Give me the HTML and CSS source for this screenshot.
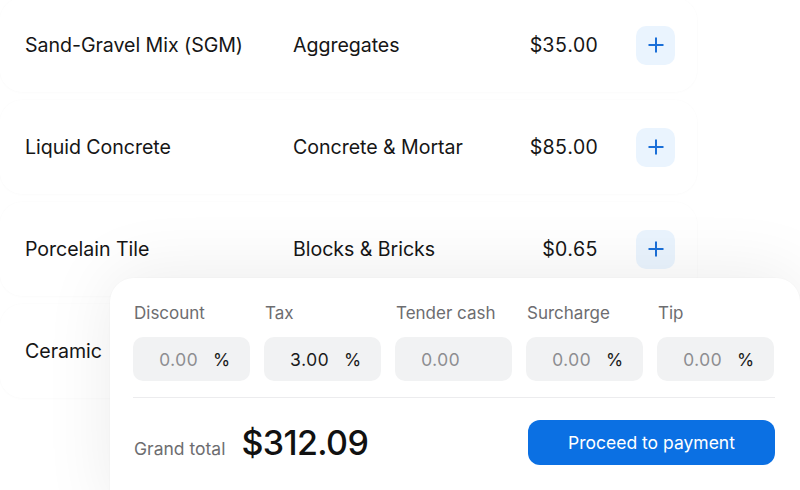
FILE: index.html
```html
<!DOCTYPE html>
<html>
<head>
<meta charset="utf-8">
<link rel="stylesheet" href="styles.css">
</head>
<body>
<div class="page">
  <div class="list">
    <div class="row">
      <span class="name">Sand-Gravel Mix (SGM)</span>
      <span class="cat">Aggregates</span>
      <span class="price">$35.00</span>
      <button class="add"><svg width="18" height="18" viewBox="0 0 18 18"><path d="M9 1.5v15M1.5 9h15" stroke="#1a6fd8" stroke-width="2" fill="none"/></svg></button>
    </div>
    <div class="row">
      <span class="name">Liquid Concrete</span>
      <span class="cat">Concrete &amp; Mortar</span>
      <span class="price">$85.00</span>
      <button class="add"><svg width="18" height="18" viewBox="0 0 18 18"><path d="M9 1.5v15M1.5 9h15" stroke="#1a6fd8" stroke-width="2" fill="none"/></svg></button>
    </div>
    <div class="row">
      <span class="name">Porcelain Tile</span>
      <span class="cat">Blocks &amp; Bricks</span>
      <span class="price">$0.65</span>
      <button class="add"><svg width="18" height="18" viewBox="0 0 18 18"><path d="M9 1.5v15M1.5 9h15" stroke="#1a6fd8" stroke-width="2" fill="none"/></svg></button>
    </div>
    <div class="row">
      <span class="name">Ceramic</span>
      <span class="cat"></span>
      <span class="price"></span>
      <button class="add"><svg width="18" height="18" viewBox="0 0 18 18"><path d="M9 1.5v15M1.5 9h15" stroke="#1a6fd8" stroke-width="2" fill="none"/></svg></button>
    </div>
  </div>

  <div class="panel">
    <div class="fields">
      <div class="field"><span class="label">Discount</span><div class="input"><span class="val">0.00</span><span class="unit">%</span></div></div>
      <div class="field"><span class="label">Tax</span><div class="input"><span class="val set">3.00</span><span class="unit">%</span></div></div>
      <div class="field"><span class="label">Tender cash</span><div class="input"><span class="val">0.00</span></div></div>
      <div class="field"><span class="label">Surcharge</span><div class="input"><span class="val">0.00</span><span class="unit">%</span></div></div>
      <div class="field"><span class="label">Tip</span><div class="input"><span class="val">0.00</span><span class="unit">%</span></div></div>
    </div>
    <div class="divider"></div>
    <div class="footer">
      <div class="total"><span class="gt-label">Grand total</span><span class="gt-value">$312.09</span></div>
      <button class="pay">Proceed to payment</button>
    </div>
  </div>
</div>
</body>
</html>
```

FILE: styles.css
```css
* { box-sizing: border-box; }
html, body {
  margin: 0;
  padding: 0;
  background: #ffffff;
  overflow: hidden;
}
body {
  width: 800px;
  height: 490px;
  font-family: Inter, "Noto Sans", sans-serif;
  color: #161616;
}
.page {
  position: relative;
  width: 800px;
  height: 490px;
  overflow: hidden;
}
.list {
  display: flex;
  flex-direction: column;
  gap: 8px;
  margin-top: -2px;
  width: 697px;
}
.row {
  height: 94px;
  display: flex;
  align-items: center;
  padding-left: 25px;
  border-radius: 22px;
  background: #ffffff;
  box-shadow: 0 0 0 1px rgba(0, 0, 0, 0.008), 0 1px 4px rgba(0, 0, 0, 0.012);
  font-size: 19.6px;
  letter-spacing: -0.05px;
}
.name { width: 268px; }
.cat { width: 200px; }
.price { width: 105px; text-align: right; font-variant-numeric: tabular-nums; }
.add {
  margin-left: 38px;
  width: 39px;
  height: 39px;
  border: none;
  border-radius: 10px;
  background: #eaf4fe;
  display: flex;
  align-items: center;
  justify-content: center;
  padding: 0;
}
.panel {
  position: absolute;
  left: 110px;
  top: 278px;
  width: 690px;
  height: 240px;
  background: #ffffff;
  border-radius: 24px;
  padding: 24px 23px 0 23px;
  box-shadow: 0 -4px 70px rgba(0, 0, 0, 0.08), 0 0 0 1px rgba(0, 0, 0, 0.012);
}
.fields {
  display: grid;
  grid-template-columns: repeat(5, 117px);
  column-gap: 14px;
}
.field {
  display: flex;
  flex-direction: column;
  gap: 13px;
}
.label {
  font-size: 17px;
  line-height: 22px;
  color: #6d6d70;
  padding-left: 1px;
}
.input {
  height: 44px;
  border-radius: 10px;
  background: #f1f2f3;
  display: flex;
  align-items: center;
  padding-left: 26px;
  font-size: 17.5px;
  font-variant-numeric: tabular-nums;
}
.val {
  width: 40px;
  color: #8d8d90;
}
.val.set { color: #1a1a1a; }
.unit {
  margin-left: 14px;
  color: #1a1a1a;
}
.divider {
  height: 1px;
  background: #ececee;
  margin-top: 16px;
  width: 642px;
}
.footer {
  display: flex;
  align-items: center;
  justify-content: space-between;
  width: 642px;
  margin-top: 22px;
}
.total {
  display: flex;
  align-items: baseline;
  gap: 16px;
}
.gt-label {
  font-size: 17.5px;
  color: #6d6d70;
  padding-left: 1px;
}
.gt-value {
  font-size: 34px;
  font-weight: 500;
  letter-spacing: -0.6px;
  color: #111;
}
.pay {
  width: 247px;
  height: 45px;
  border: none;
  border-radius: 12px;
  background: #0b70e3;
  color: #ffffff;
  font-family: Inter, "Noto Sans", sans-serif;
  font-size: 17.5px;
}
```
